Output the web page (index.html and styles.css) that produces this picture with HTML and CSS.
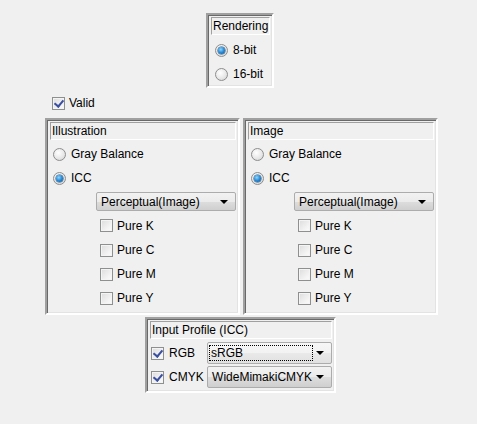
FILE: index.html
```html
<!DOCTYPE html>
<html>
<head>
<meta charset="utf-8">
<link rel="stylesheet" href="styles.css">
</head>
<body>
<div class="page">
  <div class="frame rendering">
    <div class="title">Rendering</div>
    <div class="row first"><span class="radio on"></span><span>8-bit</span></div>
    <div class="row"><span class="radio"></span><span>16-bit</span></div>
  </div>

  <div class="valid"><span class="check on"></span><span>Valid</span></div>

  <div class="pair">
    <div class="frame panel">
      <div class="title">Illustration</div>
      <div class="row"><span class="radio"></span><span>Gray Balance</span></div>
      <div class="row"><span class="radio on"></span><span>ICC</span></div>
      <div class="combo intent"><span class="ctext">Perceptual(Image)</span><span class="arrow"></span></div>
      <div class="row sub k"><span class="check"></span><span>Pure K</span></div>
      <div class="row sub"><span class="check"></span><span>Pure C</span></div>
      <div class="row sub"><span class="check"></span><span>Pure M</span></div>
      <div class="row sub"><span class="check"></span><span>Pure Y</span></div>
    </div>
    <div class="frame panel">
      <div class="title">Image</div>
      <div class="row"><span class="radio"></span><span>Gray Balance</span></div>
      <div class="row"><span class="radio on"></span><span>ICC</span></div>
      <div class="combo intent"><span class="ctext">Perceptual(Image)</span><span class="arrow"></span></div>
      <div class="row sub k"><span class="check"></span><span>Pure K</span></div>
      <div class="row sub"><span class="check"></span><span>Pure C</span></div>
      <div class="row sub"><span class="check"></span><span>Pure M</span></div>
      <div class="row sub"><span class="check"></span><span>Pure Y</span></div>
    </div>
  </div>

  <div class="frame input">
    <div class="title">Input Profile (ICC)</div>
    <div class="prow">
      <div class="plabel"><span class="check on"></span><span>RGB</span></div>
      <div class="combo profile focus"><span class="ctext"><span class="dots">sRGB</span></span><span class="arrow"></span></div>
    </div>
    <div class="prow">
      <div class="plabel"><span class="check on"></span><span>CMYK</span></div>
      <div class="combo profile"><span class="ctext">WideMimakiCMYK</span><span class="arrow"></span></div>
    </div>
  </div>
</div>
</body>
</html>
```

FILE: styles.css
```css
* { box-sizing: border-box; }
html, body { margin: 0; padding: 0; }
body {
  background: #f0f0f0;
  font-family: "Liberation Sans", Arial, sans-serif;
  font-size: 12px;
  color: #000;
  width: 477px;
  height: 424px;
  overflow: hidden;
}
.page { padding-top: 13px; }

.frame {
  border: 2px solid;
  border-color: #a0a0a0 #ffffff #ffffff #a0a0a0;
  box-shadow: inset 1px 1px 0 #696969, inset -1px -1px 0 #e3e3e3;
  padding: 2px 2px 0 3px;
}
.title {
  height: 18px;
  line-height: 16px;
  border: 1px solid;
  border-color: #a0a0a0 #ffffff #ffffff #a0a0a0;
  padding-left: 1px;
  white-space: nowrap;
}

.row {
  display: flex;
  align-items: center;
  height: 24px;
  white-space: nowrap;
}
.row > span:last-child { margin-left: 5px; }

.radio {
  width: 13px; height: 13px;
  border-radius: 50%;
  border: 1px solid #8d8d8d;
  background: radial-gradient(circle at 40% 35%, #ffffff 0%, #e8e8e8 55%, #cfcfcf 100%);
  position: relative;
  flex: none;
  margin-left: 3px;
}
.radio.on::after {
  content: "";
  position: absolute;
  left: 2px; top: 2px;
  width: 7px; height: 7px;
  border-radius: 50%;
  background: radial-gradient(circle at 40% 35%, #8fd6ff 0%, #2a8ad4 50%, #0d4f8a 100%);
  box-shadow: 0 0 0 0.5px #1c5180;
}

.check {
  width: 13px; height: 13px;
  border: 1px solid #8e8f8f;
  background: linear-gradient(135deg, #dcdcdc 0%, #f4f4f4 70%, #fbfbfb 100%);
  box-shadow: inset 0 0 0 1px #f4f4f4;
  flex: none;
  position: relative;
}
.check.on::after {
  content: "";
  position: absolute;
  left: 3px; top: 0px;
  width: 4px; height: 7px;
  border: solid #3a4fa0;
  border-width: 0 2px 2px 0;
  transform: rotate(40deg);
}

.rendering {
  margin-left: 206px;
  width: 68px;
  height: 75px;
}
.rendering .title { margin-left: 0; padding-left: 1px; }
.rendering .row { margin-left: 1px; }
.rendering .first { margin-top: 3px; }

.valid {
  display: flex;
  align-items: center;
  height: 16px;
  margin: 7px 0 0 52px;
}
.valid span:last-child { margin-left: 4px; }

.pair {
  display: flex;
  gap: 3px;
  margin: 7px 0 0 45px;
}
.panel {
  width: 195px;
  height: 197px;
}
.panel .row { height: 24px; }
.panel .title + .row { margin-top: 2px; }

.combo {
  display: flex;
  align-items: center;
  height: 19px;
  border: 1px solid #acacac;
  border-radius: 2px;
  background: linear-gradient(#f2f2f2, #ebebeb 50%, #dddddd 51%, #cfcfcf);
  position: relative;
}
.ctext { flex: 1; padding-left: 4px; white-space: nowrap; }
.arrow {
  width: 0; height: 0;
  border-left: 4px solid transparent;
  border-right: 4px solid transparent;
  border-top: 4px solid #000;
  margin-right: 7px;
}
.intent {
  margin: 2px 0 2px 46px;
  width: 140px;
}
.sub { margin-left: 50px; }
.panel .sub.k { margin-top: 1px; height: 25px; }
.sub > span:last-child { margin-left: 4px; }

.input {
  margin: 2px 0 0 145px;
  width: 191px;
  height: 76px;
}
.prow {
  display: flex;
  align-items: center;
  height: 24px;
}
.input .title + .prow { margin-top: 2px; }
.plabel {
  display: flex;
  align-items: center;
  width: 57px;
  margin-left: 1px;
}
.plabel span:last-child { margin-left: 5px; }
.profile { width: 127px; height: 22px; }
.focus { background: linear-gradient(#f6f6f6, #f2f2f2 50%, #e9e9e9 51%, #e1e1e1); }
.dots {
  display: inline-block;
  outline: 1px dotted #000;
  width: 102px;
  padding-left: 1px;
  line-height: 14px;
  margin-left: -2px;
}
```
